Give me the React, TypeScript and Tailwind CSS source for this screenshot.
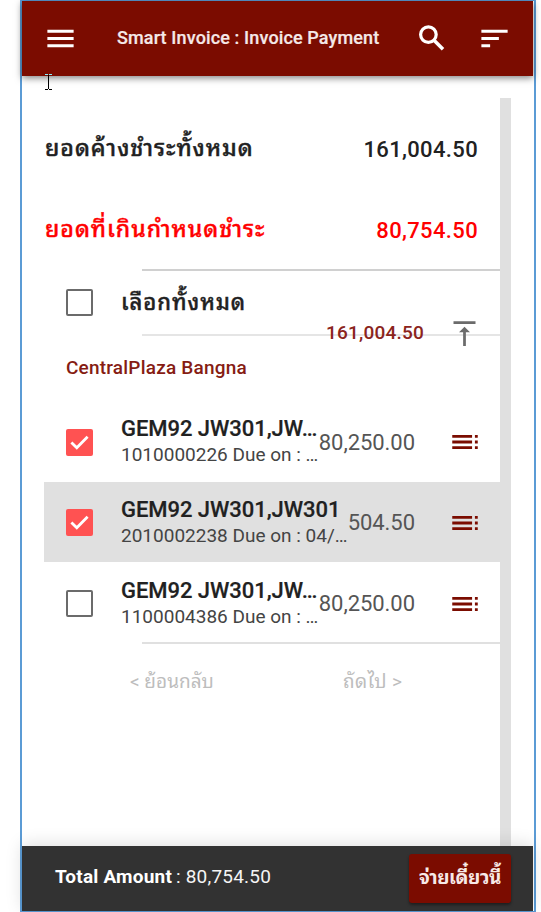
import { MdMenu, MdSort, MdToc, MdVerticalAlignTop } from "react-icons/md";

type Invoice = {
  title: string;
  detail: string;
  amount: string;
  checked: boolean;
  rowClass: string;
};

const invoices: Invoice[] = [
  { title: "GEM92 JW301,JW…", detail: "1010000226 Due on : …", amount: "80,250.00", checked: true, rowClass: "h-[80px]" },
  { title: "GEM92 JW301,JW301", detail: "2010002238 Due on : 04/…", amount: "504.50", checked: true, rowClass: "-mr-[11px] h-[80px] bg-[#e0e0e0] pr-[11px] pt-[1px]" },
  { title: "GEM92 JW301,JW…", detail: "1100004386 Due on : …", amount: "80,250.00", checked: false, rowClass: "h-[80px] pt-[3px]" },
];

function Checkbox({ checked }: { checked: boolean }) {
  if (!checked) {
    return <span className="block size-[27px] shrink-0 rounded-[2px] border-2 border-[#6b6b6b] bg-white" />;
  }
  return (
    <span className="block size-[27px] shrink-0 rounded-[2px] bg-[#ff5252]">
      <svg viewBox="0 0 27 27" className="size-[27px]" fill="none" stroke="#fff" strokeWidth="2.8">
        <path d="M5.4 13.4 10.8 18.8 21.6 7.8" />
      </svg>
    </span>
  );
}

function SearchIcon() {
  return (
    <svg viewBox="0 0 34 34" className="mb-[2px] ml-[35px] size-[34px]" fill="none" stroke="#fff">
      <circle cx="13.4" cy="13.6" r="7.8" strokeWidth="3.2" />
      <path d="m19 19.2 9 9" strokeWidth="3.6" />
    </svg>
  );
}

function Divider({ className }: { className: string }) {
  return <div className={`ml-[98px] ${className}`} />;
}

export default function App() {
  return (
    <div className="h-[912px] w-[541px] overflow-hidden bg-white pl-5 font-['Roboto','Noto_Sans_Thai_Looped','Loma','Waree','Garuda','Umpush','Noto_Sans_Thai','Noto_Sans',sans-serif] whitespace-nowrap">
      <div className="relative flex h-[912px] w-[516px] flex-col border-2 border-y border-[#5b9bd5]">
        <header className="relative z-10 flex h-[75px] w-[511px] shrink-0 items-center bg-[#7b0c00] pl-[21px] text-white shadow-[0_2px_7px_rgba(0,0,0,0.5)]">
          <MdMenu size={35} />
          <h1 className="mb-[2px] ml-[39px] w-[263px] text-[18px] font-medium tracking-[0.13px] text-[#f5e9e8] [-webkit-text-stroke:0.2px_#f5e9e8]">Smart Invoice : Invoice Payment</h1>
          <SearchIcon />
          <MdSort size={35} className="ml-[28px]" />
        </header>

        <main className="flex min-h-0 grow pt-[22px] pl-[22px]">
          <div className="w-[456px] shrink-0 text-[#212121]">
            <div className="flex h-[90px] items-center justify-between pt-[12px] pr-[22px] pl-[1px] text-[22px] font-medium">
              <span className="text-[23px] tracking-[0.95px] [-webkit-text-stroke:0.4px_#212121]">ยอดค้างชำระทั้งหมด</span>
              <span className="tracking-[0.35px]">161,004.50</span>
            </div>
            <div className="flex h-[81px] items-center justify-between pt-[3px] pr-[22px] pl-[1px] text-[22px] font-medium text-[#ff0000]">
              <span className="text-[23px] tracking-[0.95px] [-webkit-text-stroke:0.4px_#ff0000]">ยอดที่เกินกำหนดชำระ</span>
              <span className="tracking-[0.35px]">80,754.50</span>
            </div>
            <Divider className="h-[2px] bg-[#d0d0d0]" />
            <div className="flex h-[63px] items-center pl-[22px]">
              <Checkbox checked={false} />
              <span className="ml-[28px] text-[22px] font-medium tracking-[0.95px] [-webkit-text-stroke:0.4px_#212121]">เลือกทั้งหมด</span>
            </div>
            <div className="relative">
              <Divider className="h-[2px] bg-[#e5e5e5]" />
              <div className="absolute -top-[17px] right-0 flex h-[33px] items-center">
                <span className="mr-[24px] text-[19px] font-medium tracking-[0.2px] text-[#8b241c]">161,004.50</span>
                <MdVerticalAlignTop size={33} className="mr-[19px] text-[#6b6b6b]" />
              </div>
            </div>
            <div className="flex h-[66px] items-center pb-[2px] pl-[22px] text-[19px] font-medium tracking-[0.2px] text-[#861c13]">CentralPlaza Bangna</div>
            {invoices.map((invoice) => (
              <div key={invoice.detail} className={`flex items-center pl-[22px] ${invoice.rowClass}`}>
                <Checkbox checked={invoice.checked} />
                <div className="ml-[28px] w-[199px] shrink-0">
                  <div className="text-[22px] leading-[26px] font-medium tracking-[-0.05px] [-webkit-text-stroke:0.2px_#212121]">{invoice.title}</div>
                  <div className="text-[19px] leading-[26px] text-[#444]">{invoice.detail}</div>
                </div>
                <div className="flex w-[95px] shrink-0 justify-end text-[22px] tracking-[-0.05px] text-[#555]">{invoice.amount}</div>
                <MdToc size={34} className="ml-[33px] text-[#7b0c00]" />
              </div>
            ))}
            <Divider className="h-[2px] bg-[#e0e0e0]" />
            <div className="flex h-[76px] items-center text-[19px] text-[#bdbdbd]">
              <span className="ml-[86px] w-[213px]">&lt; ย้อนกลับ</span>
              <span className="tracking-[0.4px]">ถัดไป &gt;</span>
            </div>
          </div>
          <div className="w-[11px] bg-[#e0e0e0]" />
        </main>

        <footer className="relative flex h-[65px] w-[511px] shrink-0 items-center bg-[#323232] pr-[22px] pl-[33px] text-[19px] text-[#f5f5f5] shadow-[0_-2px_16px_rgba(0,0,0,0.13)]">
          <b className="mb-[2px] font-bold tracking-[0.2px] text-white">Total Amount</b>
          <span className="mb-[2px] ml-[4px] tracking-[0.2px]">: 80,754.50</span>
          <button className="ml-auto flex h-[49px] w-[102px] items-center justify-center rounded-[3px] bg-[#7b0c00] text-[19px] font-bold tracking-[-0.4px] text-[#f7e9e7] shadow-[0_2px_3px_rgba(0,0,0,0.4)]">จ่ายเดี๋ยวนี้</button>
        </footer>

        <svg viewBox="0 0 7 16" className="absolute top-[73px] left-[23px] z-20 h-4 w-[7px]" shapeRendering="crispEdges">
          <path d="M3 1h1v14H3zM0 15h3v1H0zM4 15h3v1H4z" fill="#000" />
          <path d="M0 0h3v1H0zM4 0h3v1H4z" fill="#84f3ff" />
        </svg>
      </div>
    </div>
  );
}
